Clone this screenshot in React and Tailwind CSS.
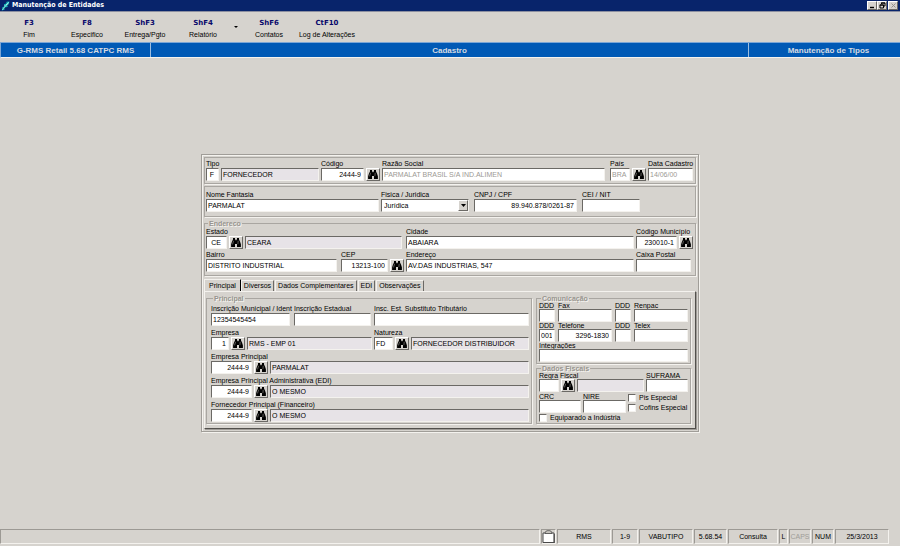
import React, { useId } from 'react';
import clsx from 'clsx';

const keys = [
  { key: 'F3', label: 'Fim' },
  { key: 'F8', label: 'Especifico' },
  { key: 'ShF3', label: 'Entrega/Pgto' },
  { key: 'ShF4', label: 'Relatório', menu: true },
  { key: 'ShF6', label: 'Contatos' },
  { key: 'CtF10', label: 'Log de Alterações' },
];

const tabs = ['Principal', 'Diversos', 'Dados Complementares', 'EDI', 'Observações'];

const status = [
  { text: 'RMS', w: 'w-[54px]' },
  { text: '1-9', w: 'w-[26px]' },
  { text: 'VABUTIPO', w: 'w-[54px]' },
  { text: '5.68.54', w: 'w-[33px]' },
  { text: 'Consulta', w: 'w-[50px]' },
  { text: 'L', w: 'w-[9px]' },
  { text: 'CAPS', w: 'w-[22px]', off: true },
  { text: 'NUM', w: 'w-[22px]' },
  { text: '25/3/2013', w: 'w-[54px]' },
];

const sunken = 'border border-t-[#6b6965] border-l-[#6b6965] border-r-[#f4f2ee] border-b-[#f4f2ee]';
const raised = 'border border-t-white border-l-white border-r-[#6b6965] border-b-[#6b6965]';
const etched = 'border border-[#a9a6a1] shadow-[1px_1px_0_#f4f2ee]';

const Box = ({ className, ...props }) => (
  <input type="text" {...props}
    className={clsx('h-[13px] min-w-0 pl-px pr-[2px] text-[7px] leading-[9px] outline-none rounded-none', sunken,
      props.readOnly ? 'bg-[#e7e3e7]' : 'bg-white', className)} />
);

const Find = ({ label }) => (
  <button type="button" aria-label={label}
    className={clsx('w-[14px] h-[13px] shrink-0 flex items-center justify-center bg-[#d6d3ce]', raised)}>
    <svg width="10" height="9" viewBox="0 0 10 9">
      <path d="M2 0h2v1.4h.5v.9h1v-.9H6V0h2v1.4l1 2.2.9 2.6V9H6V6H4v3H.1V6.2L1 3.6l1-2.2z" fill="#000" />
      <path d="M2.6 2.8L1.5 6.4M7.2 2.8L6.9 6.2" stroke="#9c9994" strokeWidth=".6" />
    </svg>
  </button>
);

// label on top, code box below, with an optional search button and description
const Field = ({ label, w = 'w-full', className, tight, find, desc, inputClass, ...props }) => {
  const id = useId();
  return (
    <div className={clsx('flex flex-col min-w-0', className)}>
      <label htmlFor={id} className={clsx('whitespace-nowrap', tight ? 'leading-[7px]' : 'leading-[9px]')}>{label}</label>
      <div className="flex gap-[2px]">
        <Box id={id} className={clsx(w, inputClass)} {...props} />
        {find && <Find label={`Procurar ${label}`} />}
        {desc !== undefined && <Box readOnly aria-label={`Descrição ${label}`} defaultValue={desc} className="flex-1" />}
      </div>
    </div>
  );
};

const Group = ({ title, className, children }) => (
  <fieldset className={clsx('min-w-0 pr-[2px]', etched, className)}>
    <legend className="ml-[2px] px-px font-bold leading-[7px] text-[#98958f] bg-[#d6d3ce] [text-shadow:1px_1px_0_#f4f2ee]">{title}</legend>
    {children}
  </fieldset>
);

const Check = ({ label }) => (
  <label className="flex items-center gap-[3px] h-[10px] whitespace-nowrap">
    <input type="checkbox" className={clsx('appearance-none w-[8px] h-[8px] shrink-0 bg-white', sunken)} />
    {label}
  </label>
);

const WinButton = ({ label, children }) => (
  <button type="button" aria-label={label} className={clsx('w-[10px] h-[9px] flex items-center justify-center bg-[#d6d3ce]', raised)}>
    <svg width="7" height="7" viewBox="0 0 7 7" fill="none" stroke="#000">{children}</svg>
  </button>
);

const TitleBar = () => (
  <header className="h-[12px] pl-px pr-[2px] flex items-center bg-[#08246b] border-b border-[#8c8fa0] text-white">
    <svg width="10" height="10" viewBox="0 0 10 10" className="mr-px">
      <path d="M.8 9.4l.6-3.2 1.8-.6L3 3.2l2.2-.6L5.6.8 8.4.4l-.6 3L6.4 4l.4 1.8-2.6.8-.8 2.2z" fill="#14b8b8" />
      <path d="M1.6 8.6L4 5.6l-.4-1M4.6 5L7.6 1.4M5.4 3.6l1 .2" stroke="#d8ffff" strokeWidth=".8" fill="none" />
      <path d="M2.8 7.8l1.4-1.4M6.2 4.6l1-1" stroke="#00202c" strokeWidth=".7" />
    </svg>
    <h1 className="flex-1 font-['DejaVu_Sans_Condensed','DejaVu_Sans',sans-serif] font-bold text-[7px] leading-[11px]">Manutenção de Entidades</h1>
    <div className="flex">
      <WinButton label="Minimizar"><path d="M1 5.5h4" strokeWidth="1.4" /></WinButton>
      <WinButton label="Restaurar">
        <path d="M2.5 2V1h3.5v3H5M1 3h3.5v3H1zM2 1h4M.7 3h4" />
      </WinButton>
      <div className="ml-px">
        <WinButton label="Fechar"><path d="M1.5 1.5l4 4M5.5 1.5l-4 4" stroke="#94918c" /></WinButton>
      </div>
    </div>
  </header>
);

const Toolbar = () => (
  <nav className="h-[30px] flex pt-[5px]">
    {keys.map((k) => (
      <React.Fragment key={k.key}>
        <button type="button" className="w-[58px] flex flex-col items-center whitespace-nowrap">
          <span className="font-['DejaVu_Sans',sans-serif] font-bold leading-[12px] text-[#08086b]">{k.key}</span>
          <span className="leading-[12px]">{k.label}</span>
        </button>
        {k.menu && (
          <button type="button" aria-label="Mais relatórios" className="w-[8px] flex justify-center pt-[9px]">
            <svg width="4" height="2" viewBox="0 0 4 2"><path d="M0 0h4L2 2z" fill="#000" /></svg>
          </button>
        )}
      </React.Fragment>
    ))}
  </nav>
);

const Banner = () => (
  <div className="h-[16px] flex bg-[#0059b5] border-t border-l border-t-[#7ba6d6] border-l-[#7ba6d6] border-b border-b-[#f4f2ee] text-[#d6dbe2] text-[8px] leading-[15px] font-bold text-center">
    <span className="w-[150px] border-r border-[#9cbde0]">G-RMS Retail 5.68 CATPC RMS</span>
    <span className="flex-1 border-r border-[#9cbde0]">Cadastro</span>
    <span className="w-[151px] pl-2">Manutenção de Tipos</span>
  </div>
);

const PersonType = () => (
  <div className="flex flex-col w-[88px] mr-[3px]">
    <label htmlFor="pessoa" className="leading-[9px]">Fisica / Juridica</label>
    <div className="relative">
      <select id="pessoa" defaultValue="J" className={clsx('appearance-none w-full h-[13px] px-[2px] leading-[9px] bg-white outline-none', sunken)}>
        <option value="F">Física</option>
        <option value="J">Jurídica</option>
      </select>
      <span className={clsx('absolute right-px top-px w-[10px] h-[11px] flex items-center justify-center bg-[#d6d3ce] pointer-events-none', raised)}>
        <svg width="5" height="3" viewBox="0 0 5 3"><path d="M0 0h5L2.5 3z" fill="#000" /></svg>
      </span>
    </div>
  </div>
);

const MainTab = () => (
  <Group title="Principal" className="flex-1 pl-1">
    <div className="flex flex-col gap-[2px] pt-[2px] pb-px">
      <div className="flex gap-[3px]">
        <Field label="Inscrição Municipal / Ident" className="w-[79px] mr-px" defaultValue="12354545454" />
        <Field label="Inscrição Estadual" className="w-[77px]" />
        <Field label="Insc. Est. Substituto Tributário" className="flex-1" />
      </div>
      <div className="flex gap-[2px]">
        <Field label="Empresa" className="w-[161px]" w="w-[18px]" find desc="RMS - EMP 01" defaultValue="1" inputClass="text-right" />
        <Field label="Natureza" className="flex-1" w="w-[19px]" find desc="FORNECEDOR DISTRIBUIDOR" defaultValue="FD" />
      </div>
      <Field label="Empresa Principal" w="w-[41px]" find desc="PARMALAT" defaultValue="2444-9" inputClass="text-right" />
      <Field label="Empresa Principal Administrativa (EDI)" w="w-[41px]" find desc="O MESMO" defaultValue="2444-9" inputClass="text-right" />
      <Field label="Fornecedor Principal (Financeiro)" w="w-[41px]" find desc="O MESMO" defaultValue="2444-9" inputClass="text-right" />
    </div>
  </Group>
);

const SideGroups = () => (
  <div className="w-[155px] flex flex-col gap-px">
    <Group title="Comunicação" className="pl-[2px]">
      <div className="flex gap-[3px]">
        <Field tight label="DDD" className="w-[16px]" />
        <Field tight label="Fax" className="flex-1" />
        <Field tight label="DDD" className="w-[16px]" />
        <Field tight label="Renpac" className="flex-1" />
      </div>
      <div className="flex gap-[3px]">
        <Field tight label="DDD" className="w-[16px]" defaultValue="0013" />
        <Field tight label="Telefone" className="flex-1" defaultValue="3296-1830" inputClass="text-right" />
        <Field tight label="DDD" className="w-[16px]" />
        <Field tight label="Telex" className="flex-1" />
      </div>
      <Field tight label="Integrações" className="pb-px" />
    </Group>
    <Group title="Dados Fiscais" className="flex-1 pl-[2px]">
      <div className="flex gap-[2px]">
        <Field tight label="Regra Fiscal" className="flex-1" w="w-[20px]" find desc="" />
        <Field tight label="SUFRAMA" className="w-[42px] shrink-0" />
      </div>
      <div className="flex gap-[2px] pt-px">
        <Field tight label="CRC" className="w-[42px]" />
        <Field tight label="NIRE" className="w-[43px]" />
        <div className="flex flex-col">
          <Check label="Pis Especial" />
          <Check label="Cofins Especial" />
        </div>
      </div>
      <Check label="Equiparado a Indústria" />
    </Group>
  </div>
);

const EntityForm = () => (
  <form className="w-full max-w-[498px] p-[2px] border border-[#a09d98] shadow-[inset_1px_1px_0_#f4f2ee,1px_1px_0_#f4f2ee]">
    <section className={clsx('flex gap-[2px] pl-px pr-[2px] pt-px pb-[2px]', etched)}>
      <Field label="Tipo" className="w-[113px]" w="w-[13px]" desc="FORNECEDOR" defaultValue="F" inputClass="text-center" />
      <Field label="Código" w="w-[43px]" find defaultValue="2444-9" inputClass="text-right" />
      <Field label="Razão Social" className="flex-1 mr-[3px]" defaultValue="PARMALAT BRASIL S/A IND.ALIMEN" inputClass="text-[#9c9994]" />
      <Field label="País" w="w-[20px]" find defaultValue="BRA" inputClass="text-[#9c9994]" />
      <Field label="Data Cadastro" className="w-[45px]" defaultValue="14/06/00" inputClass="text-[#9c9994]" />
    </section>

    <section className={clsx('flex gap-[2px] mt-[2px] pl-px pr-[2px] pt-[3px] pb-1', etched)}>
      <Field label="Nome Fantasia" className="w-[173px]" defaultValue="PARMALAT" />
      <PersonType />
      <Field label="CNPJ / CPF" className="w-[103px] mr-[3px]" defaultValue="89.940.878/0261-87" inputClass="text-right" />
      <Field label="CEI / NIT" className="w-[58px]" />
    </section>

    <Group title="Endereco" className="mt-[3px] pl-px pb-[3px]">
      <div className="flex">
        <Field label="Estado" className="w-[196px] mr-1" w="w-[21px]" find desc="CEARA" defaultValue="CE" inputClass="text-center" />
        <Field label="Cidade" className="flex-1 mr-[2px]" defaultValue="ABAIARA" />
        <Field label="Código Município" className="w-[57px]" w="w-[41px]" find defaultValue="230010-1" inputClass="text-right" />
      </div>
      <div className="flex pt-px">
        <Field label="Bairro" className="w-[131px] mr-1" defaultValue="DISTRITO INDUSTRIAL" />
        <Field label="CEP" className="w-[63px] mr-[2px]" w="w-[48px]" find defaultValue="13213-100" inputClass="text-right" />
        <Field label="Endereço" className="flex-1 mr-[2px]" defaultValue="AV.DAS INDUSTRIAS, 547" />
        <Field label="Caixa Postal" className="w-[55px] mr-[2px]" />
      </div>
    </Group>

    <div role="tablist" className="flex mt-[3px] h-[12px]">
      {tabs.map((t, i) => (
        <button key={t} type="button" role="tab" aria-selected={i === 0}
          className={clsx('leading-[10px] whitespace-nowrap border-t border-l border-r border-t-[#f4f2ee] border-l-[#f4f2ee]',
            i === 0 ? 'px-1 border-r-black' : 'px-[2px] mt-px mr-px border-r-[#6b6965]')}>
          {t}
        </button>
      ))}
    </div>
    <div role="tabpanel" className="flex gap-1 pt-[3px] pb-1 pl-px pr-1 border border-t-[#f4f2ee] border-l-[#f4f2ee] border-r-[#52504c] border-b-[#52504c] shadow-[1px_1px_0_#a09d98]">
      <MainTab />
      <SideGroups />
    </div>
  </form>
);

const cell = 'h-[15px] border border-t-[#9c9994] border-l-[#9c9994] border-r-[#f4f2ee] border-b-[#f4f2ee]';

const StatusBar = () => (
  <footer className="h-[18px] pt-px pr-[11px] flex gap-px leading-[13px] text-center">
    <div className={clsx('flex-1', cell)} />
    <div className={clsx('w-[15px] flex items-center justify-center', cell)}>
      <svg width="13" height="13" viewBox="0 0 13 13">
        <path d="M1 3h11v9.5H1z" fill="#fff" stroke="#4a4a4a" />
        <path d="M3 3.5C3 1 5 .6 6.5.6S10 1 10 3.5z" fill="#c6c3bd" stroke="#4a4a4a" strokeWidth=".8" />
        <path d="M12.3 4v9M2 12.6h10" stroke="#4a4a4a" />
      </svg>
    </div>
    {status.map((s) => (
      <div key={s.text} className={clsx(s.w, cell, s.off && 'text-[#a09d98]')}>{s.text}</div>
    ))}
  </footer>
);

export default function App() {
  return (
    <div className="min-h-screen flex flex-col bg-[#d6d3ce] font-['Liberation_Sans',Arial,sans-serif] text-[7px] text-black">
      <TitleBar />
      <Toolbar />
      <Banner />
      <main className="flex-1 flex items-center justify-center">
        <EntityForm />
      </main>
      <StatusBar />
    </div>
  );
}
